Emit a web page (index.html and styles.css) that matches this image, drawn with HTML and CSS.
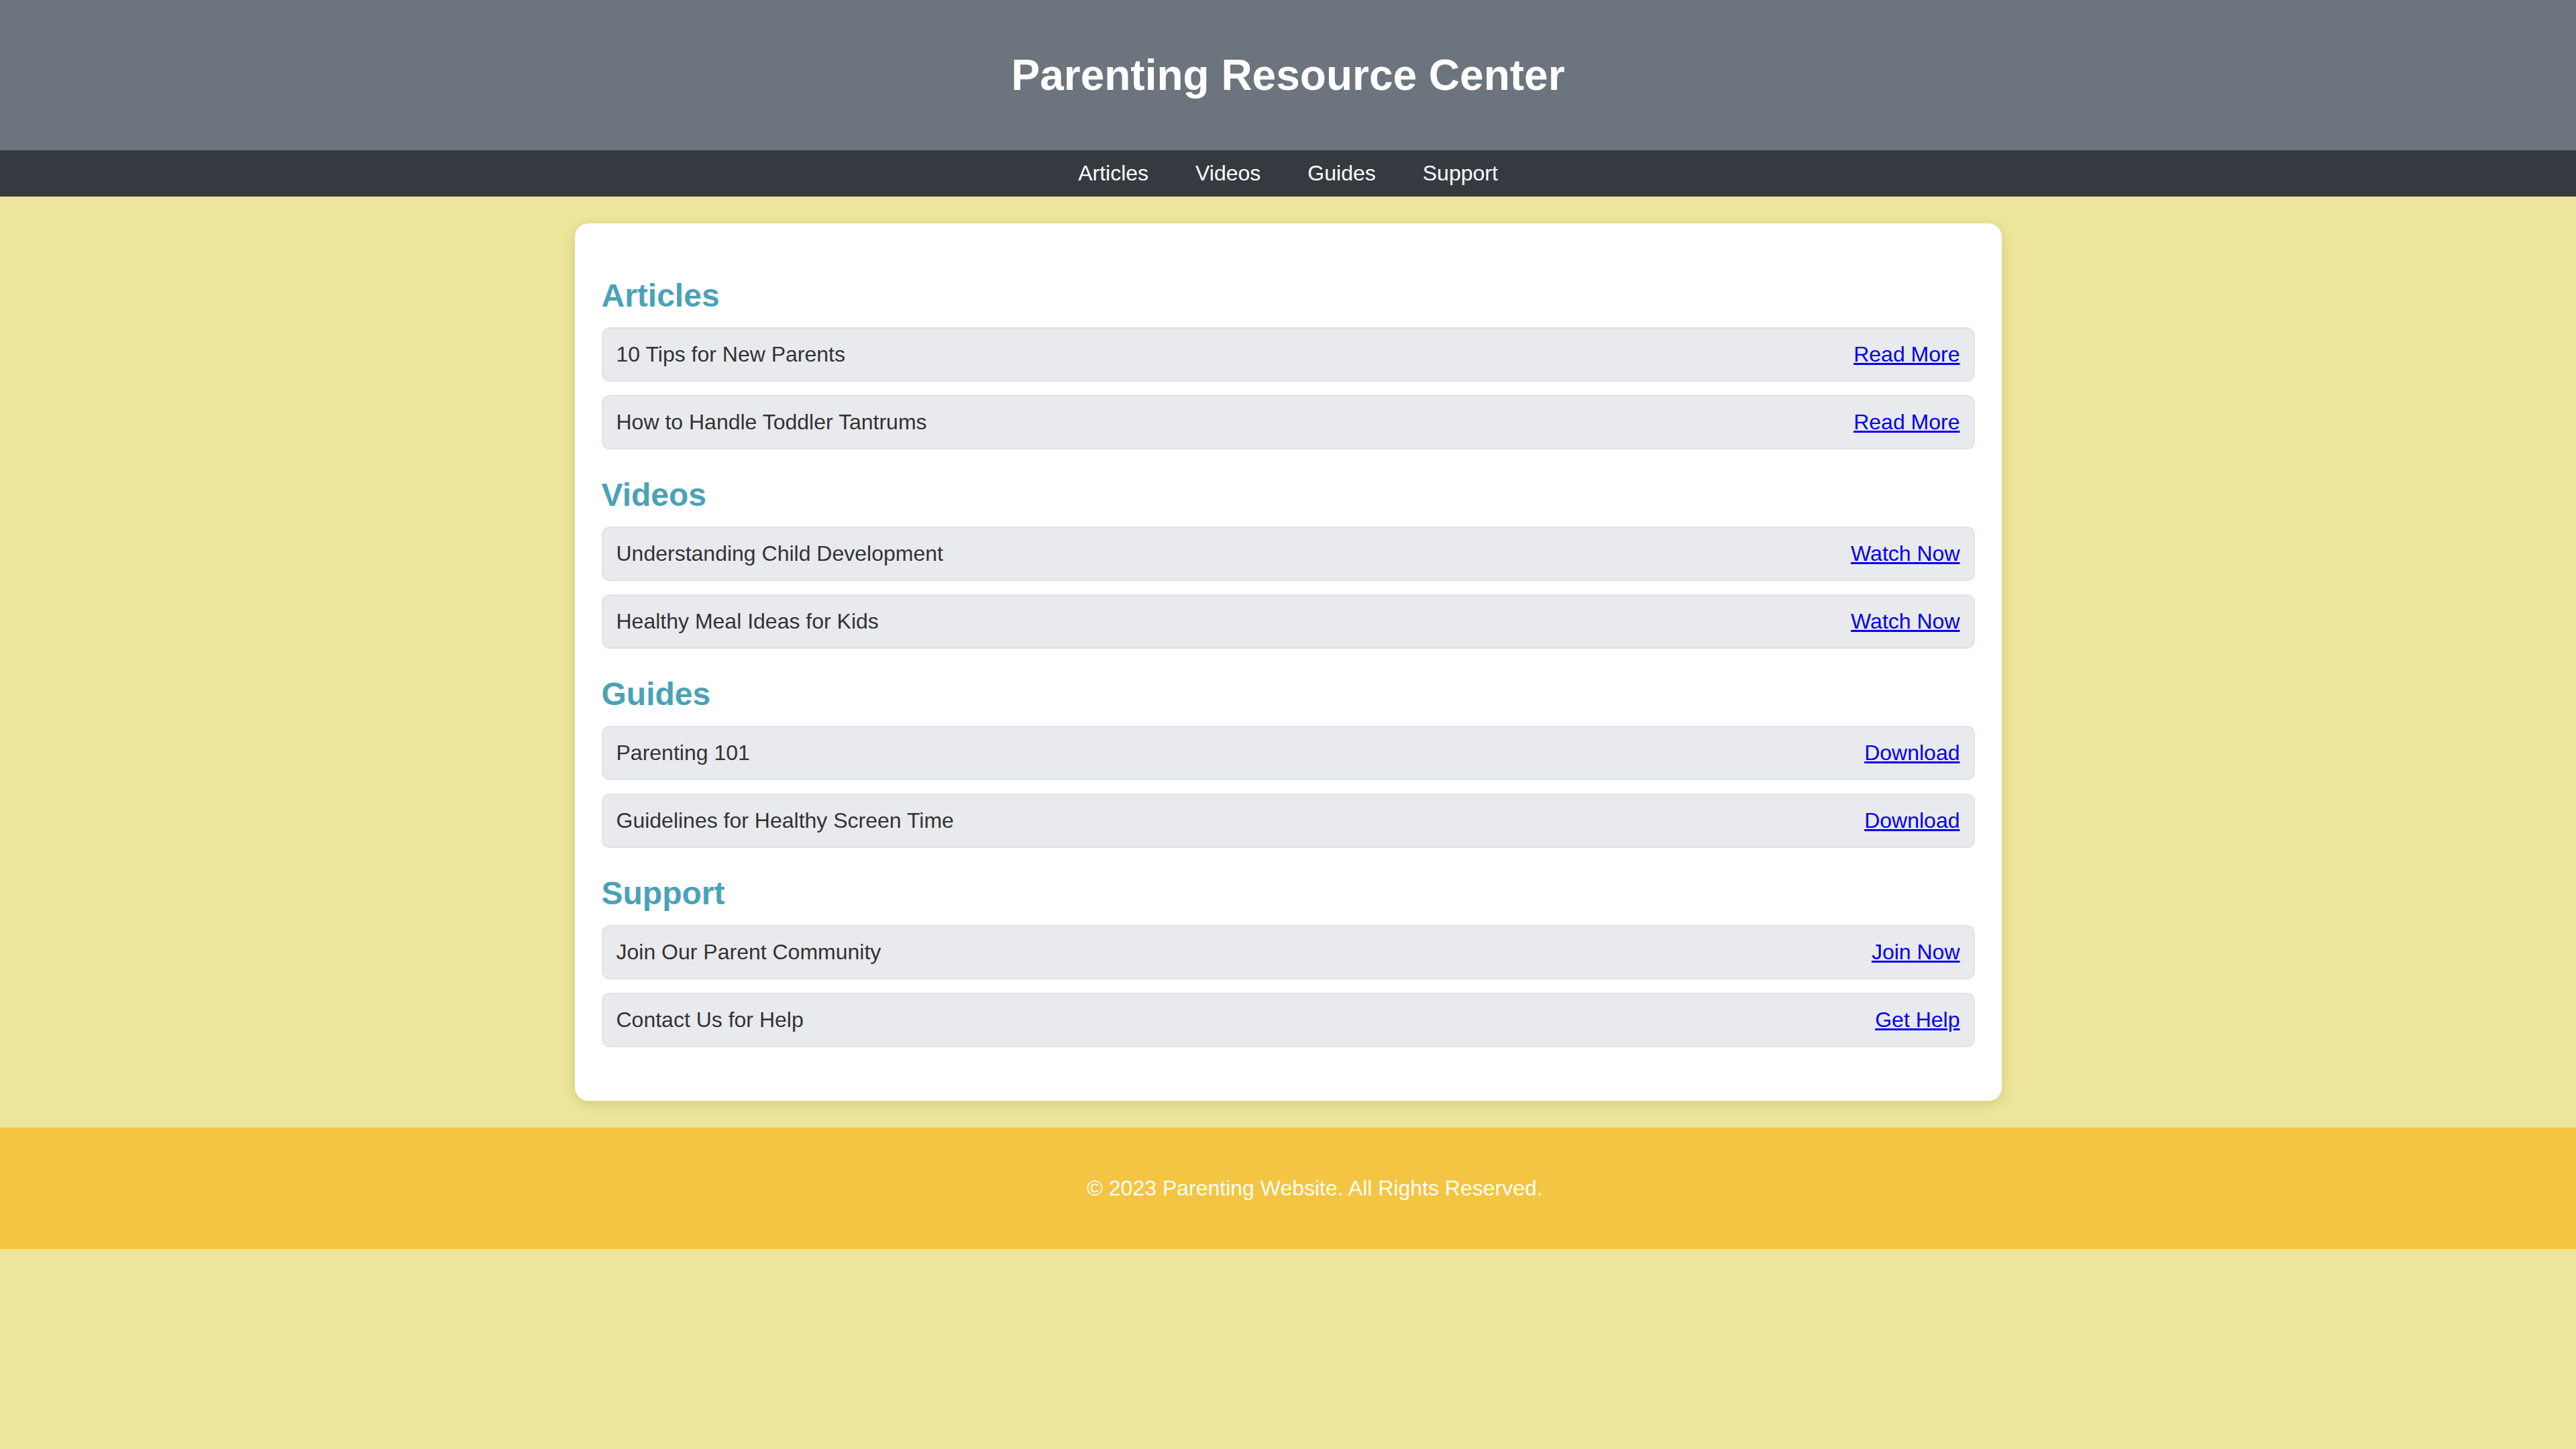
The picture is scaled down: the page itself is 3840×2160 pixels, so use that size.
FILE: index.html
```html
<!DOCTYPE html>
<html lang="en">
<head>
<meta charset="utf-8">
<title>Parenting Resource Center</title>
<link rel="stylesheet" href="styles.css">
</head>
<body>
<header class="site-header">
  <h1 class="site-title">Parenting Resource Center</h1>
</header>
<nav class="site-nav">
  <a href="#articles">Articles</a>
  <a href="#videos">Videos</a>
  <a href="#guides">Guides</a>
  <a href="#support">Support</a>
</nav>
<main class="card">
  <section class="section" id="articles">
    <h2 class="section-title">Articles</h2>
    <div class="item"><span class="item-name">10 Tips for New Parents</span><a href="#">Read More</a></div>
    <div class="item"><span class="item-name">How to Handle Toddler Tantrums</span><a href="#">Read More</a></div>
  </section>
  <section class="section" id="videos">
    <h2 class="section-title">Videos</h2>
    <div class="item"><span class="item-name">Understanding Child Development</span><a href="#">Watch Now</a></div>
    <div class="item"><span class="item-name">Healthy Meal Ideas for Kids</span><a href="#">Watch Now</a></div>
  </section>
  <section class="section" id="guides">
    <h2 class="section-title">Guides</h2>
    <div class="item"><span class="item-name">Parenting 101</span><a href="#">Download</a></div>
    <div class="item"><span class="item-name">Guidelines for Healthy Screen Time</span><a href="#">Download</a></div>
  </section>
  <section class="section" id="support">
    <h2 class="section-title">Support</h2>
    <div class="item"><span class="item-name">Join Our Parent Community</span><a href="#">Join Now</a></div>
    <div class="item"><span class="item-name">Contact Us for Help</span><a href="#">Get Help</a></div>
  </section>
</main>
<footer class="site-footer">
  <p>&copy; 2023 Parenting Website. All Rights Reserved.</p>
</footer>
</body>
</html>
```
FILE: styles.css
```css
html, body {
  margin: 0;
  padding: 0;
}
body {
  background: #ede599;
  font-family: "Liberation Sans", Arial, Helvetica, sans-serif;
  font-size: 32px;
  line-height: normal;
  color: #333333;
}
.site-header {
  background: #6c757d;
  color: #ffffff;
  text-align: center;
  padding: 32px 0;
}
.site-title {
  margin: 43px 0;
  font-size: 64px;
  font-weight: bold;
}
.site-nav {
  background: #343a40;
  display: flex;
  justify-content: center;
  gap: 70px;
  padding: 16px 0;
}
.site-nav a {
  color: #ffffff;
  text-decoration: none;
}
.card {
  display: block;
  box-sizing: border-box;
  width: 2127px;
  margin: 40px auto;
  padding: 40px;
  background: #ffffff;
  border-radius: 20px;
  box-shadow: 0 4px 20px rgba(0, 0, 0, 0.12);
}
.section {
  margin-bottom: 40px;
}
.section-title {
  color: #4aa2b6;
  font-size: 48px;
  font-weight: bold;
  margin: 40px 0 20px;
}
.item {
  display: flex;
  justify-content: space-between;
  align-items: center;
  background: #e9eaee;
  border: 2px solid #e2e3e6;
  border-radius: 12px;
  padding: 20px 20px;
  margin-bottom: 20px;
}
.item-name {
  color: #333333;
}
.item a {
  color: #0000ee;
  text-decoration: underline;
}
.site-footer {
  background: #f4c542;
  color: #ffffff;
  text-align: center;
  padding: 40px 0 40px 80px;
}
.site-footer p {
  margin: 32px 0;
}
```
